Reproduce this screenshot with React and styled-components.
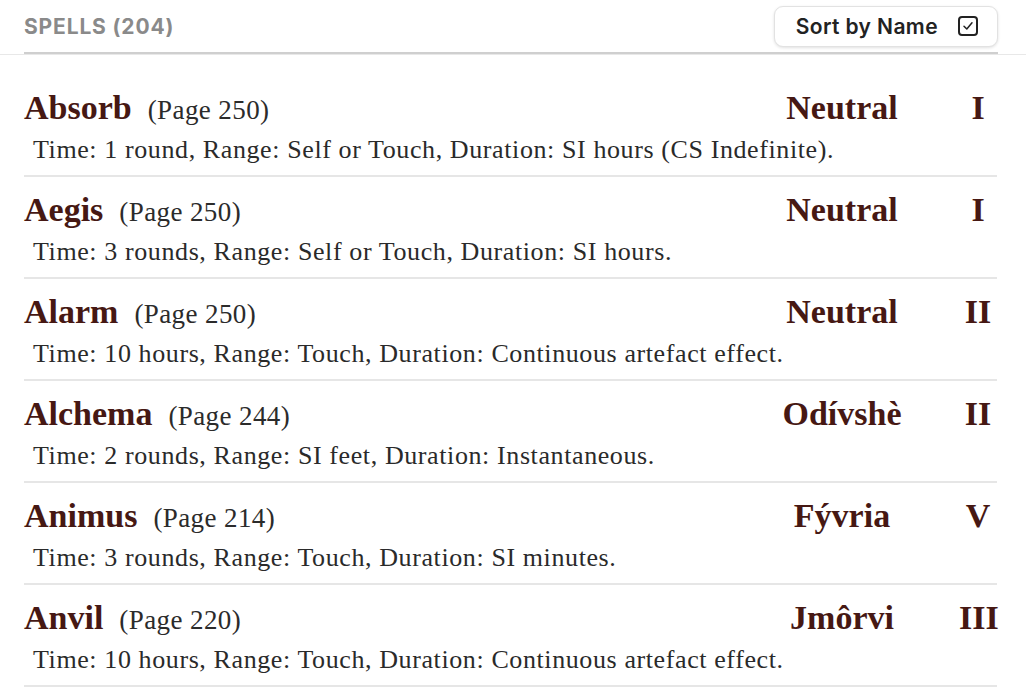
import React from "react";
import styled, { createGlobalStyle } from "styled-components";

const GlobalStyle = createGlobalStyle`
  html, body { margin: 0; padding: 0; background: #ffffff; }
  body { font-family: "Liberation Serif", "Times New Roman", serif; }
  * { box-sizing: border-box; }
`;

const Page = styled.div`
  width: 1026px;
  min-height: 694px;
  background: #ffffff;
`;

const Header = styled.header`
  border-bottom: 1px solid #e8e8e8;
  padding: 0 28px 0 24px;
`;

const HeaderBar = styled.div`
  height: 54px;
  display: flex;
  align-items: center;
  justify-content: space-between;
  border-bottom: 2px solid #cfcfcf;
`;

const Title = styled.h2`
  margin: 0;
  font-family: Inter, "Liberation Sans", sans-serif;
  font-size: 21px;
  font-weight: 700;
  letter-spacing: 0.85px;
  color: #8a8a8a;
`;

const SortButton = styled.button`
  display: flex;
  align-items: center;
  gap: 20px;
  height: 41px;
  padding: 0 19px 0 21px;
  background: #ffffff;
  border: 1px solid #e2e2e2;
  border-radius: 9px;
  box-shadow: 0 1px 3px rgba(0, 0, 0, 0.12);
  font-family: Inter, "Liberation Sans", sans-serif;
  font-size: 21px;
  font-weight: 600;
  letter-spacing: 0.4px;
  color: #222222;
  cursor: pointer;
`;

const List = styled.ul`
  list-style: none;
  margin: 0;
  padding: 20px 29px 0 24px;
`;

const Row = styled.li`
  padding: 14px 0 6px;
  border-bottom: 2px solid #e6e6e6;
`;

const TopLine = styled.div`
  display: grid;
  grid-template-columns: 1fr 200px 38px;
  column-gap: 17px;
  align-items: baseline;
  height: 42px;
`;

const NameCell = styled.div`
  display: flex;
  align-items: baseline;
  gap: 16px;
  white-space: nowrap;
`;

const Name = styled.span`
  font-size: 34px;
  font-weight: 700;
  color: #461813;
`;

const PageRef = styled.span`
  font-size: 27px;
  letter-spacing: 0.4px;
  color: #2b2b2b;
`;

const School = styled.span`
  font-size: 34px;
  font-weight: 700;
  color: #461813;
  text-align: center;
  white-space: nowrap;
`;

const Level = styled(School)``;

const Description = styled.p`
  margin: 0;
  padding-left: 9px;
  font-size: 26px;
  letter-spacing: 0.6px;
  line-height: 38px;
  color: #2a2a2a;
  white-space: nowrap;
`;

const CheckIcon = () => (
  <svg width="20" height="20" viewBox="0 0 20 20" fill="none">
    <rect x="1" y="1" width="18" height="18" rx="3" stroke="#222" strokeWidth="2" />
    <path d="M6 10.2 L8.8 13 L14 6.8" stroke="#222" strokeWidth="1.5" strokeLinecap="round" strokeLinejoin="round" />
  </svg>
);

const spells = [
  { name: "Absorb", page: 250, school: "Neutral", level: "I", desc: "Time: 1 round, Range: Self or Touch, Duration: SI hours (CS Indefinite)." },
  { name: "Aegis", page: 250, school: "Neutral", level: "I", desc: "Time: 3 rounds, Range: Self or Touch, Duration: SI hours." },
  { name: "Alarm", page: 250, school: "Neutral", level: "II", desc: "Time: 10 hours, Range: Touch, Duration: Continuous artefact effect." },
  { name: "Alchema", page: 244, school: "Odívshè", level: "II", desc: "Time: 2 rounds, Range: SI feet, Duration: Instantaneous." },
  { name: "Animus", page: 214, school: "Fývria", level: "V", desc: "Time: 3 rounds, Range: Touch, Duration: SI minutes." },
  { name: "Anvil", page: 220, school: "Jmôrvi", level: "III", desc: "Time: 10 hours, Range: Touch, Duration: Continuous artefact effect." },
];

export default function App() {
  return (
    <Page>
      <GlobalStyle />
      <Header>
        <HeaderBar>
          <Title>SPELLS (204)</Title>
          <SortButton>
            Sort by Name
            <CheckIcon />
          </SortButton>
        </HeaderBar>
      </Header>
      <List>
        {spells.map((s) => (
          <Row key={s.name}>
            <TopLine>
              <NameCell>
                <Name>{s.name}</Name>
                <PageRef>(Page {s.page})</PageRef>
              </NameCell>
              <School>{s.school}</School>
              <Level>{s.level}</Level>
            </TopLine>
            <Description>{s.desc}</Description>
          </Row>
        ))}
      </List>
    </Page>
  );
}
